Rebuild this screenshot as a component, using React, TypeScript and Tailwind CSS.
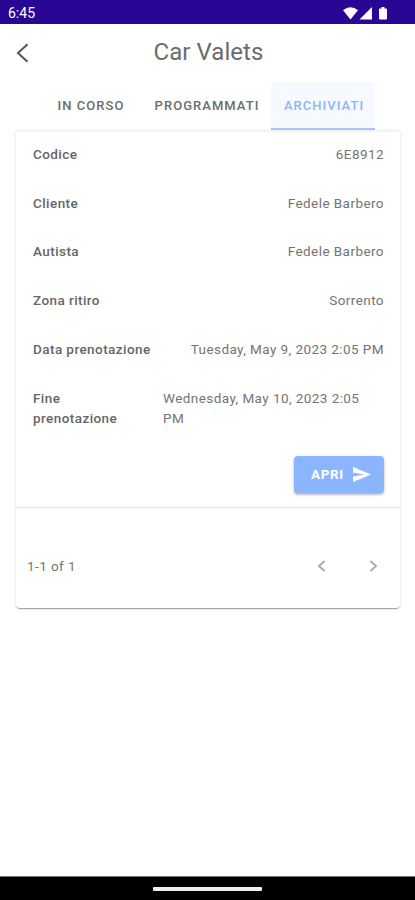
import React from 'react';

const rows: [string, string][] = [
  ['Codice', '6E8912'],
  ['Cliente', 'Fedele Barbero'],
  ['Autista', 'Fedele Barbero'],
  ['Zona ritiro', 'Sorrento'],
  ['Data prenotazione', 'Tuesday, May 9, 2023 2:05 PM'],
];

function StatusBar() {
  return (
    <div className="flex h-6 items-center justify-between bg-[#290794] pl-2 pr-[27px] pt-[2px] text-white">
      <span className="text-[14px] leading-4">6:45</span>
      <svg width="45" height="15" viewBox="0 0 45 15" fill="currentColor">
        <path d="M0 4.2Q7.5-1.8 15 4.2L7.5 13.5Z" />
        <path d="M29 1V13.5H16.5Z" />
        <path d="M37 2.400h1.500V1h3v1.400H43q1 0 1 1v9.100q0 1-1 1h-6q-1 0-1-1V3.400q0-1 1-1Z" />
      </svg>
    </div>
  );
}

export default function App() {
  return (
    <div className="flex h-[900px] w-[415px] flex-col bg-white font-['Roboto',sans-serif] text-[#747474]">
      <StatusBar />
      <header className="grid h-[58px] grid-cols-[54px_1fr_53px] items-center">
        <button className="pl-4" aria-label="Back">
          <svg width="13" height="20" viewBox="0 0 13 20" fill="none" stroke="#555" strokeWidth="2">
            <path d="M11.500 1.200L2 10l9.500 8.800" />
          </svg>
        </button>
        <h1 className="pb-[2px] pl-[1px] text-center text-[24px] leading-8 tracking-[0.050px] text-[#6c6c6c]">Car Valets</h1>
      </header>
      <nav className="mx-4 flex h-[48px] justify-end pr-6 text-[13px] font-medium tracking-[1.040px] text-[#6c6c6c]">
        <button className="w-[105px] pr-[3px]">IN CORSO</button>
        <button className="w-[126px] whitespace-nowrap pr-[2px]">PROGRAMMATI</button>
        <button className="w-[104px] border-b-2 border-[#a9c6f5] bg-[#f6faff] pl-[2px] pt-[2px] text-[#8cb5fc]">ARCHIVIATI</button>
      </nav>
      <main className="mx-4 flex h-[478px] w-[384px] flex-col rounded-b border-t-2 border-[#f2f2f2] text-[13.500px] leading-5 tracking-[0.430px] shadow-[0_2px_1px_-1px_#0003,0_1px_1px_#0002,0_1px_3px_#0002]">
        <dl className="-mt-[2px] pl-[17px] pr-4">
          {rows.map(([label, value]) => (
            <div key={label} className="flex h-[48.600px] items-center justify-between">
              <dt className="font-medium text-[#666]">{label}</dt>
              <dd>{value}</dd>
            </div>
          ))}
          <div className="flex h-[70px] items-center justify-between">
            <dt className="w-[110px] font-medium text-[#666]">Fine prenotazione</dt>
            <dd className="w-[221px] pr-4">Wednesday, May 10, 2023 2:05 PM</dd>
          </div>
        </dl>
        <div className="flex h-[65px] shrink-0 justify-end border-b border-[#e4e4e4] pr-4 pt-[13px]">
          <button className="flex h-[37px] w-[90px] items-center gap-[9px] rounded bg-[#8cb5ff] pl-[17px] text-[13.500px] font-bold tracking-[0.600px] text-white shadow-[0_2px_2px_#0003,0_1px_4px_#0002]">
            APRI
            <svg width="18" height="15" viewBox="2 3 21 18" preserveAspectRatio="none" fill="currentColor">
              <path d="M2.010 21L23 12 2.010 3 2 9.500l13 2.500-13 2.500z" />
            </svg>
          </button>
        </div>
        <footer className="flex flex-1 items-center justify-between pl-[11px] pr-[22px] pt-[16px]">
          <span>1-1 of 1</span>
          <div className="flex gap-[43px]">
            <svg width="9" height="12" viewBox="0 0 9 12" fill="none" stroke="#aaa" strokeWidth="1.900">
              <path d="M7.500 1L2 6l5.500 5" />
            </svg>
            <svg width="9" height="12" viewBox="0 0 9 12" fill="none" stroke="#aaa" strokeWidth="1.900">
              <path d="M1.500 1L7 6l-5.500 5" />
            </svg>
          </div>
        </footer>
      </main>
      <div className="mt-auto flex h-6 items-center justify-center border-t border-[#777] bg-black">
        <div className="h-1 w-[109px] rounded-[1px] bg-[#eee]" />
      </div>
    </div>
  );
}
